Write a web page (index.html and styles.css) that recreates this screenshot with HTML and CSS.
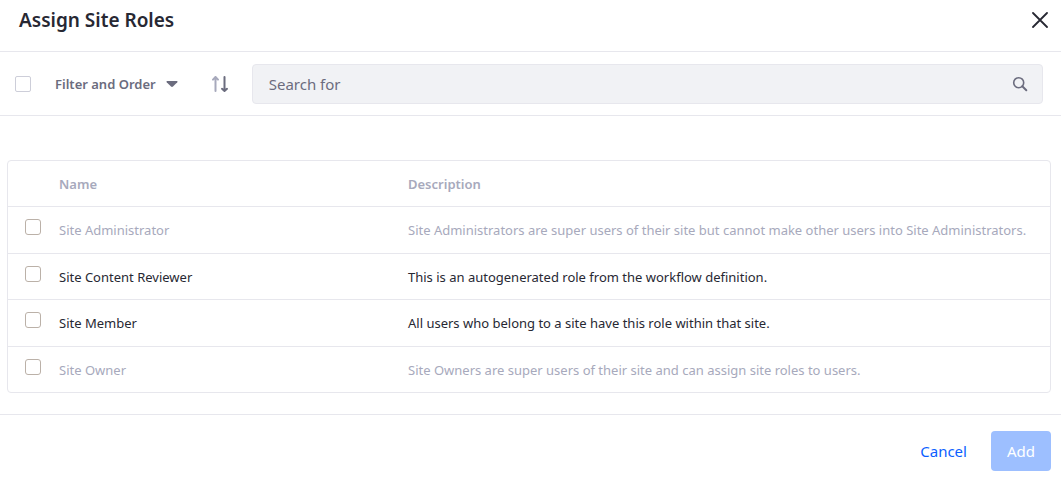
FILE: index.html
```html
<!DOCTYPE html>
<html lang="en">
<head>
<meta charset="utf-8">
<meta name="viewport" content="width=device-width, initial-scale=1">
<title>Assign Site Roles</title>
<link rel="stylesheet" href="styles.css">
</head>
<body>
<div class="modal">
  <header class="modal-header">
    <h1 class="modal-title">Assign Site Roles</h1>
    <button class="icon-button close" type="button" aria-label="Close">
      <svg width="16" height="16" viewBox="0 0 16 16"><path d="M1 1L15 15M15 1L1 15" fill="none" stroke="currentColor" stroke-width="1.8" stroke-linecap="round"/></svg>
    </button>
  </header>
  <form class="toolbar">
    <input class="checkbox select-all" type="checkbox" aria-label="Select all">
    <button class="filter" type="button">Filter and Order
      <svg width="12" height="6" viewBox="0 0 12 6"><path d="M1.2 0H10.8Q12 .2 11.3 1.2L7 5.5Q6 6.3 5 5.5L.7 1.2Q0 .2 1.2 0Z" fill="currentColor"/></svg>
    </button>
    <button class="icon-button sort" type="button" aria-label="Reverse sort direction">
      <svg width="16" height="16" viewBox="0 0 16 16"><path class="sort-up" d="M3.5 15V2M1 3.6L3.5 1L6 3.6"/><path class="sort-down" d="M12.5 1V14M10 12.8L12.5 15L15 12.8"/></svg>
    </button>
    <div class="search">
      <input class="search-input" type="text" placeholder="Search for" aria-label="Search for">
      <button class="icon-button" type="button" aria-label="Search">
        <svg width="16" height="16" viewBox="0 0 16 16"><circle cx="6.7" cy="6.7" r="5" fill="none" stroke="currentColor" stroke-width="1.6"/><path d="M10.3 10.3L14.3 14.2" stroke="currentColor" stroke-width="2" stroke-linecap="round"/></svg>
      </button>
    </div>
  </form>
  <main class="content">
    <table class="roles">
      <thead>
        <tr><th class="select-column"></th><th class="name-column" scope="col">Name</th><th scope="col">Description</th></tr>
      </thead>
      <tbody>
        <tr class="disabled"><td><input class="checkbox" id="administrator" type="checkbox" disabled></td><td><label for="administrator">Site Administrator</label></td><td>Site Administrators are super users of their site but cannot make other users into Site Administrators.</td></tr>
        <tr><td><input class="checkbox" id="reviewer" type="checkbox"></td><td><label for="reviewer">Site Content Reviewer</label></td><td>This is an autogenerated role from the workflow definition.</td></tr>
        <tr><td><input class="checkbox" id="member" type="checkbox"></td><td><label for="member">Site Member</label></td><td>All users who belong to a site have this role within that site.</td></tr>
        <tr class="disabled"><td><input class="checkbox" id="owner" type="checkbox" disabled></td><td><label for="owner">Site Owner</label></td><td>Site Owners are super users of their site and can assign site roles to users.</td></tr>
      </tbody>
    </table>
  </main>
  <footer class="modal-footer">
    <button class="button cancel" type="button">Cancel</button>
    <button class="button add" type="button" disabled>Add</button>
  </footer>
</div>
</body>
</html>
```
FILE: styles.css
```css
* { box-sizing: border-box; }
body {
  margin: 0;
  background: #fff;
  color: #272833;
  font-family: "Noto Sans", sans-serif;
  font-size: 13px;
  line-height: 20px;
}
button, input { font: inherit; }
button { border: 0; background: none; padding: 0; }
svg { display: block; }
.modal-header {
  display: flex;
  align-items: center;
  justify-content: space-between;
  padding: 4px 13px 15px 19px;
  border-bottom: 1px solid #e7e7ed;
}
.modal-title { margin: 0; font-size: 19px; line-height: 32px; font-weight: 600; }
.icon-button { display: block; color: #6b6c7e; }
.close { color: #272833; }
.toolbar {
  display: flex;
  align-items: center;
  padding: 12px 18px 11px 15px;
  border-bottom: 1px solid #e7e7ed;
}
.checkbox {
  appearance: none;
  display: block;
  width: 16px;
  height: 16px;
  margin: 0;
  border: 1px solid #bbb1a8;
  border-radius: 3px;
  background: #fff;
}
.select-all { border-color: #cdced9; border-radius: 2px; }
.checkbox:checked { background: #0b5fff; }
.filter {
  display: flex;
  align-items: center;
  gap: 10px;
  margin-left: 24px;
  color: #6b6c7e;
  font-weight: 600;
  white-space: nowrap;
}
.sort { margin: 0 24px 0 34px; }
.sort path { fill: none; stroke-width: 2; stroke-linecap: round; stroke-linejoin: round; }
.sort-up { stroke: #a7a9bc; }
.sort-down { stroke: #6b6c7e; }
.search {
  display: flex;
  flex: 1;
  align-items: center;
  height: 40px;
  padding: 0 14px 0 16px;
  border: 1px solid #e7e7ed;
  border-radius: 4px;
  background: #f1f2f5;
}
.search-input {
  flex: 1;
  min-width: 0;
  padding: 0;
  border: 0;
  outline: 0;
  background: none;
  color: #272833;
  font-size: 15px;
  line-height: 24px;
}
.search-input::placeholder { color: #6b6c7e; opacity: 1; }
.content { padding: 44px 10px 21px 7px; }
.roles {
  width: 100%;
  table-layout: fixed;
  border: 1px solid #e7e7ed;
  border-radius: 4px;
  border-collapse: separate;
  border-spacing: 0;
}
th, td { height: 46px; padding: 0 16px; text-align: left; }
th { height: 45px; color: #a7a9bc; font-weight: 600; }
th:first-child, td:first-child { padding: 0 0 6px 17px; }
th:nth-child(2), td:nth-child(2) { padding-left: 0; }
tbody td { border-top: 1px solid #e7e7ed; }
tbody tr:nth-child(odd) td { height: 47px; }
.select-column { width: 51px; }
.name-column { width: 333px; }
.disabled { color: #a7a9bc; }
.modal-footer {
  display: flex;
  justify-content: flex-end;
  gap: 8px;
  padding: 16px 10px 6px;
  border-top: 1px solid #e7e7ed;
}
.button {
  height: 40px;
  padding: 0 16px;
  border-radius: 4px;
  font-size: 15px;
  line-height: 24px;
}
.cancel { color: #0b5fff; }
.add { background: #9dbfff; color: #fff; }
```
